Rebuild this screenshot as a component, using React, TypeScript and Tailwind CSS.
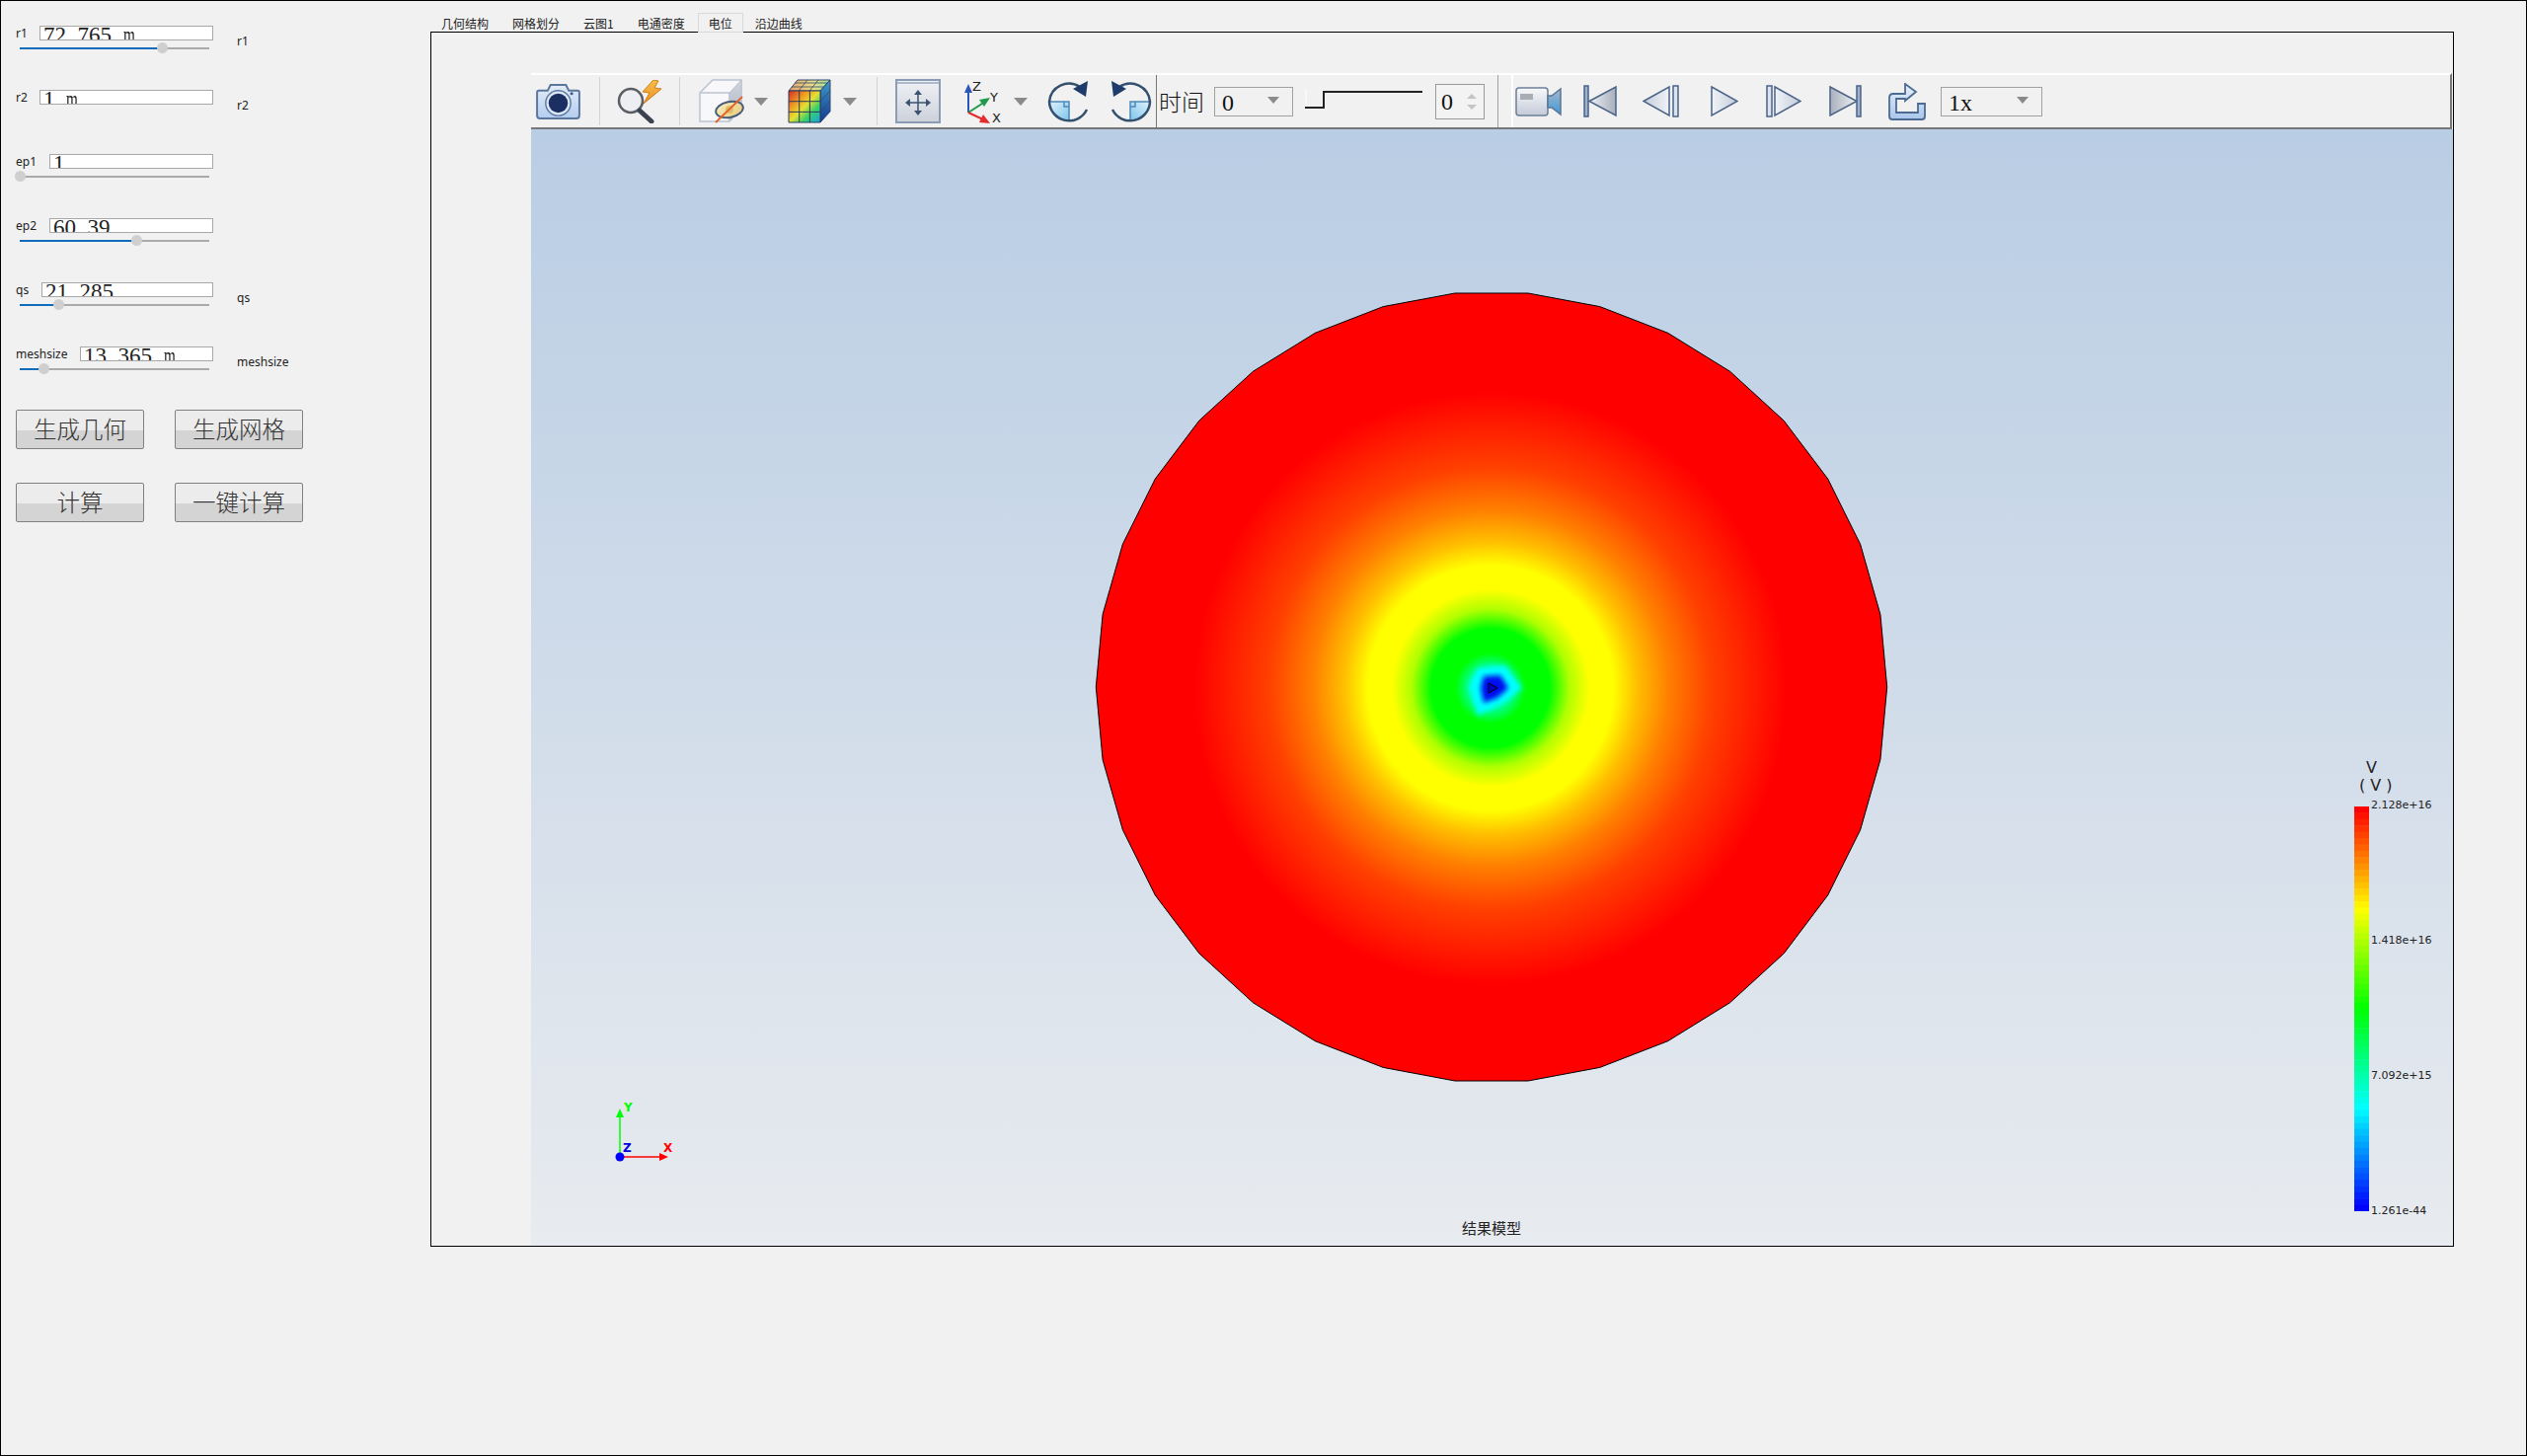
import React from "react";

const SERIF = "font-['Liberation_Serif','Noto_Sans_CJK_SC',serif]";
const CJK = "font-['Noto_Sans_CJK_SC',sans-serif]";

function Sim({ text }: { text: string }) {
  return (
    <>
      {text.split("").map((c, i) => (
        <span key={i} className={c === "m" ? "inline-block w-[11.5px] origin-left scale-x-[0.66]" : "inline-block w-[11.5px] text-center"}>
          {c === " " ? "\u00a0" : c}
        </span>
      ))}
    </>
  );
}

function Row({ label, value, inputW, pct, side }: { label: string; value: string; inputW: number; pct?: number; side?: string }) {
  return (
    <div className="flex h-[65px] pl-[15px]">
      <div className="w-[200px]">
        <div className="flex h-[15px] items-center justify-between">
          <span className="text-[12px] leading-[14px] text-[#222]">{label}</span>
          <div style={{ width: inputW }} className={`h-[15px] overflow-hidden border border-[#a8a8a8] bg-white pl-[3px] text-[23px] leading-[23px] text-[#222] ${SERIF}`}>
            <div className="-mt-[3px] whitespace-nowrap">
              <Sim text={value} />
            </div>
          </div>
        </div>
        {pct !== undefined && (
          <div className="relative ml-[4px] mt-[7px] h-[2px] w-[192px] bg-[#aaaaaa]">
            <div style={{ width: `${pct}%` }} className="h-full bg-[#0f6cbd]" />
            <div style={{ left: `${pct}%` }} className="absolute -top-[5px] -ml-[5px] h-[11px] w-[11px] rounded-full bg-[#cfcfcf]" />
          </div>
        )}
      </div>
      {side && <span className="ml-[24px] mt-[9px] h-[14px] text-[12px] leading-[14px] text-[#222]">{side}</span>}
    </div>
  );
}

function Btn({ children }: { children: React.ReactNode }) {
  return (
    <div className={`flex h-[40px] w-[130px] items-center justify-center rounded-[2px] border border-[#808080] bg-[linear-gradient(to_bottom,#ececec_52%,#d4d4d4_52%)] text-[23.5px] font-light leading-none text-[#333] ${CJK}`}>
      {children}
    </div>
  );
}

function Tri({ ml }: { ml: string }) {
  return (
    <svg width="14" height="8" viewBox="0 0 14 8" className={ml}>
      <path d="M0 0H14L7 8Z" fill="#8a8a8a" />
    </svg>
  );
}

function Sep({ ml }: { ml: string }) {
  return <div className={`h-[49px] w-px bg-[#d4d4d4] ${ml}`} />;
}

const Camera = () => (
  <svg width="45" height="37" viewBox="0 0 46 38" className="ml-[5px]">
    <defs>
      <linearGradient id="cam" x1="0" y1="0" x2="0" y2="1">
        <stop offset="0" stopColor="#e3ecf8" />
        <stop offset="1" stopColor="#b4cdee" />
      </linearGradient>
    </defs>
    <path d="M3 8H12L15 2H31L34 8H43Q45 8 45 10V34Q45 37 42 37H4Q1 37 1 34V10Q1 8 3 8Z" fill="url(#cam)" stroke="#5a769c" strokeWidth="2" />
    <circle cx="23" cy="21" r="13" fill="#dfe8f5" stroke="#5c7aa5" strokeWidth="1.5" />
    <circle cx="23" cy="21" r="10" fill="#1b2f63" />
    <circle cx="37" cy="11" r="1.6" fill="#3c5a8c" />
  </svg>
);

const Magnifier = () => (
  <svg width="47" height="44" viewBox="0 0 47 44" className="ml-[17px]">
    <defs>
      <linearGradient id="bolt" x1="0" y1="0" x2="0" y2="1">
        <stop offset="0" stopColor="#f7c04a" />
        <stop offset="1" stopColor="#ec8f26" />
      </linearGradient>
    </defs>
    <path d="M37 0L26 12L33 13L27 24L45 9L38 8L42 1Z" fill="url(#bolt)" stroke="#d47a14" strokeWidth="1" />
    <circle cx="14" cy="21" r="12" fill="#eceef2" stroke="#5a5d61" strokeWidth="2.5" />
    <path d="M23 31L35 42" stroke="#3b4250" strokeWidth="5" strokeLinecap="round" />
  </svg>
);

const HideCube = () => (
  <svg width="46" height="45" viewBox="0 0 46 45" className="ml-[19px]">
    <defs>
      <linearGradient id="cs" x1="0" y1="0" x2="0" y2="1">
        <stop offset="0" stopColor="#cfd4dc" />
        <stop offset="1" stopColor="#aeb6c4" />
      </linearGradient>
      <linearGradient id="eye" x1="0" y1="0" x2="1" y2="1">
        <stop offset="0" stopColor="#f6efc8" />
        <stop offset="1" stopColor="#e9c877" />
      </linearGradient>
    </defs>
    <path d="M1 14L14 1H43V30L31 43H1Z" fill="#f8f8fa" stroke="#bcc3d0" strokeWidth="1.5" />
    <path d="M31 14L43 1V30L31 43Z" fill="url(#cs)" stroke="#bcc3d0" strokeWidth="1" />
    <path d="M1 14H31V43" fill="none" stroke="#bcc3d0" strokeWidth="1.5" />
    <ellipse cx="31" cy="31" rx="14" ry="8" transform="rotate(-12 31 31)" fill="url(#eye)" stroke="#475a78" strokeWidth="2" />
    <circle cx="31" cy="31" r="4" fill="#e1bd68" />
    <path d="M17 44L44 18" stroke="#e0622a" strokeWidth="1.8" />
  </svg>
);

const ColorCube = () => (
  <svg width="44" height="45" viewBox="0 0 44 45" className="ml-[20px]">
    <defs>
      <linearGradient id="front" x1="0" y1="0" x2="1" y2="1">
        <stop offset="0" stopColor="#d92b25" />
        <stop offset="0.3" stopColor="#ee9a22" />
        <stop offset="0.5" stopColor="#e6e032" />
        <stop offset="0.72" stopColor="#35d06a" />
        <stop offset="1" stopColor="#16a0e6" />
      </linearGradient>
      <linearGradient id="topf" x1="0" y1="0" x2="1" y2="0">
        <stop offset="0" stopColor="#e9a06a" />
        <stop offset="0.6" stopColor="#e6e08c" />
        <stop offset="1" stopColor="#9adf9a" />
      </linearGradient>
      <linearGradient id="sidef" x1="0" y1="0" x2="0" y2="1">
        <stop offset="0" stopColor="#3f9ac8" />
        <stop offset="1" stopColor="#123a8f" />
      </linearGradient>
    </defs>
    <path d="M1 12L10 1H43L33 12Z" fill="url(#topf)" stroke="#35476a" strokeWidth="1" />
    <path d="M33 12L43 1V33L33 44Z" fill="url(#sidef)" stroke="#35476a" strokeWidth="1" />
    <path d="M11 12L20 1M22 12L31 1M4 8H36M7 4H40M33 22.7L43 12M33 33.4L43 22" stroke="#35476a" strokeWidth="0.8" fill="none" />
    <rect x="1" y="12" width="32" height="32" fill="url(#front)" />
    <path d="M1 12H33V44H1ZM11.7 12V44M22.4 12V44M1 22.7H33M1 33.4H33" fill="none" stroke="#2b3a5e" strokeWidth="1" />
  </svg>
);

const MoveIcon = () => (
  <svg width="46" height="45" viewBox="0 0 46 45" className="ml-[18px]">
    <defs>
      <linearGradient id="mv" x1="0" y1="0" x2="0" y2="1">
        <stop offset="0" stopColor="#f0f1f5" />
        <stop offset="1" stopColor="#ccd1da" />
      </linearGradient>
    </defs>
    <rect x="1" y="1" width="44" height="43" fill="url(#mv)" stroke="#8c9cb5" strokeWidth="2" />
    <rect x="2" y="3" width="42" height="2" fill="#aebacf" />
    <path d="M23 14V34M13 24H33" stroke="#3d5272" strokeWidth="1.5" />
    <path d="M23 11L27 16H19ZM23 37L27 32H19ZM10 24L15 20V28ZM36 24L31 20V28Z" fill="#3d5272" />
  </svg>
);

const AxisIcon = () => (
  <svg width="40" height="44" viewBox="0 0 40 44" className="ml-[23px]">
    <path d="M5 33V11" stroke="#2b55b8" strokeWidth="2" />
    <path d="M5 4L9 13H1Z" fill="#2b55b8" />
    <path d="M5 33L22 22" stroke="#1f9a4a" strokeWidth="2" />
    <path d="M27 18L21 27L16 20Z" fill="#1f9a4a" />
    <path d="M5 33L22 41" stroke="#e52b2b" strokeWidth="2" />
    <path d="M27 44L16 43L20 35Z" fill="#e52b2b" />
    <text x="9" y="11" fontSize="13" fill="#222" fontFamily="'DejaVu Sans',sans-serif">Z</text>
    <text x="27" y="22" fontSize="13" fill="#222" fontFamily="'DejaVu Sans',sans-serif">Y</text>
    <text x="29" y="43" fontSize="13" fill="#222" fontFamily="'DejaVu Sans',sans-serif">X</text>
  </svg>
);

const Rotate = ({ mirror, ml, id }: { mirror?: boolean; ml: string; id: string }) => (
  <svg width="43" height="44" viewBox="0 0 43 44" className={ml}>
    <defs>
      <linearGradient id={id} x1="0" y1="0" x2="1" y2="1">
        <stop offset="0" stopColor="#dff1fb" />
        <stop offset="1" stopColor="#7cc4ec" />
      </linearGradient>
    </defs>
    <g transform={mirror ? "translate(43 0) scale(-1 1)" : undefined}>
      <path d="M2 22H22V42A20 20 0 0 1 2 22Z" fill={`url(#${id})`} />
      <path d="M2 22H22V42M17 22V27H22" fill="none" stroke="#4d88b8" strokeWidth="1.5" />
      <path d="M33 7A20 20 0 0 0 2 22A20 20 0 0 0 40 30" fill="none" stroke="#34506f" strokeWidth="2.5" />
      <path d="M41 1L39 17L26 9Z" fill="#1d3b6b" />
    </g>
  </svg>
);

const Video = () => (
  <svg width="47" height="30" viewBox="0 0 47 30" className="ml-[2px]">
    <defs>
      <linearGradient id="vb" x1="0" y1="0" x2="0" y2="1">
        <stop offset="0" stopColor="#f7f8fb" />
        <stop offset="1" stopColor="#c4cbd8" />
      </linearGradient>
      <linearGradient id="vl" x1="0" y1="0" x2="0" y2="1">
        <stop offset="0" stopColor="#a8b8cc" />
        <stop offset="1" stopColor="#3d9ad8" />
      </linearGradient>
    </defs>
    <rect x="1" y="1" width="32" height="28" rx="3" fill="url(#vb)" stroke="#6d7f99" strokeWidth="1.5" />
    <rect x="5" y="7" width="13" height="6" fill="#a9adb4" />
    <path d="M33 9H37L46 2V28L37 21H33Z" fill="url(#vl)" stroke="#5c7595" strokeWidth="1.5" />
  </svg>
);

const grad = (id: string, a: string, b: string) => (
  <defs>
    <linearGradient id={id} x1="0" y1="0" x2="1" y2="0">
      <stop offset="0" stopColor={a} />
      <stop offset="1" stopColor={b} />
    </linearGradient>
  </defs>
);

const PS = "#4a6388";

const First = () => (
  <svg width="34" height="33" viewBox="0 0 34 33" className="ml-[22px]">
    {grad("f1", "#eef1f6", "#a8afbb")}
    <rect x="1" y="1" width="4" height="31" fill="#9fb1cc" stroke={PS} strokeWidth="1.5" />
    <path d="M6 16.5L33 2V31Z" fill="url(#f1)" stroke={PS} strokeWidth="1.5" />
  </svg>
);
const Prev = () => (
  <svg width="37" height="33" viewBox="0 0 37 33" className="ml-[26px]">
    {grad("p1", "#c5ccd8", "#f0f3f8")}
    <path d="M1 16.5L27 2V31Z" fill="url(#p1)" stroke={PS} strokeWidth="1.5" />
    <rect x="31" y="1" width="5" height="31" fill="#dbe3ef" stroke={PS} strokeWidth="1.5" />
  </svg>
);
const Play = () => (
  <svg width="28" height="33" viewBox="0 0 28 33" className="ml-[32px]">
    {grad("pl", "#f0f3f8", "#c5ccd8")}
    <path d="M1 2L27 16.5L1 31Z" fill="url(#pl)" stroke={PS} strokeWidth="1.5" />
  </svg>
);
const Next = () => (
  <svg width="36" height="33" viewBox="0 0 36 33" className="ml-[28px]">
    {grad("n1", "#f0f3f8", "#c5ccd8")}
    <rect x="1" y="1" width="5" height="31" fill="#dbe3ef" stroke={PS} strokeWidth="1.5" />
    <path d="M9 2L35 16.5L9 31Z" fill="url(#n1)" stroke={PS} strokeWidth="1.5" />
  </svg>
);
const Last = () => (
  <svg width="33" height="33" viewBox="0 0 33 33" className="ml-[28px]">
    {grad("l1", "#a8afbb", "#eef1f6")}
    <path d="M1 2L28 16.5L1 31Z" fill="url(#l1)" stroke={PS} strokeWidth="1.5" />
    <rect x="28" y="1" width="4" height="31" fill="#9fb1cc" stroke={PS} strokeWidth="1.5" />
  </svg>
);
const Loop = () => (
  <svg width="38" height="38" viewBox="0 0 38 38" className="ml-[27px]">
    <defs>
      <linearGradient id="lp" x1="0" y1="0" x2="0" y2="1">
        <stop offset="0" stopColor="#e8f0fa" />
        <stop offset="1" stopColor="#a9c6ea" />
      </linearGradient>
    </defs>
    <path d="M1 15Q1 11 5 11H17V5V1L28 9L17 18V16H8V30H30V21H37V34Q37 37 34 37H4Q1 37 1 34Z" fill="url(#lp)" stroke="#4d6b92" strokeWidth="1.8" />
  </svg>
);

function Combo({ w, text, ml, triRight }: { w: string; text: string; ml: string; triRight: string }) {
  return (
    <div className={`flex h-[30px] items-start justify-between border border-[#a0a0a0] pl-[7px] text-[24px] leading-[30px] text-[#111] ${SERIF} ${w} ${ml}`}>
      <span>{text}</span>
      <svg width="12" height="7" viewBox="0 0 12 7" className={`mt-[9px] ${triRight}`}>
        <path d="M0 0H12L6 7Z" fill="#8a8a8a" />
      </svg>
    </div>
  );
}

function Toolbar() {
  return (
    <div className="flex h-[57px] w-[1946px] shrink-0 items-center border-b-2 border-r-2 border-t-2 border-b-[#777777] border-r-[#777777] border-t-white">
      <Camera />
      <Sep ml="ml-[19px]" />
      <Magnifier />
      <Sep ml="ml-[16px]" />
      <HideCube />
      <Tri ml="ml-[10px]" />
      <ColorCube />
      <Tri ml="ml-[12px]" />
      <Sep ml="ml-[20px]" />
      <MoveIcon />
      <AxisIcon />
      <Tri ml="ml-[11px]" />
      <Rotate id="r1" ml="ml-[20px]" />
      <Rotate id="r2" mirror ml="ml-[20px]" />
      <div className="ml-[4px] w-px self-stretch bg-[#777777]" />
      <span className={`ml-[2px] w-[46px] text-[23px] font-light leading-none text-[#111] ${CJK}`}>时间</span>
      <Combo w="w-[80px]" text="0" ml="ml-[10px]" triRight="mr-[13px]" />
      <svg width="120" height="24" viewBox="0 0 120 24" className="ml-[12px] mb-[4px]">
        <path d="M1 1V19M19 4H119" stroke="#ffffff" strokeWidth="1" />
        <path d="M0 20H19V4H119" fill="none" stroke="#222" strokeWidth="2" />
      </svg>
      <div className={`ml-[12px] flex h-[36px] w-[50px] items-center justify-between border border-[#999999] bg-[#f3f3f3] pl-[5px] pr-[7px] text-[24px] text-[#111] ${SERIF}`}>
        <span>0</span>
        <svg width="10" height="18" viewBox="0 0 10 18">
          <path d="M0 6L5 1L10 6ZM0 12L5 17L10 12Z" fill="#c4c4c4" />
        </svg>
      </div>
      <div className="ml-[13px] w-px self-stretch bg-[#a0a0a0]" />
      <div className="ml-[13px] w-[2px] self-stretch bg-white" />
      <Video />
      <First />
      <Prev />
      <Play />
      <Next />
      <Last />
      <Loop />
      <Combo w="w-[103px]" text="1x" ml="ml-[15px]" triRight="mr-[13px]" />
    </div>
  );
}

const ramp = (t: number) => {
  const s = [
    [0, 0, 255],
    [0, 255, 255],
    [0, 255, 0],
    [255, 255, 0],
    [255, 0, 0],
  ];
  const p = Math.min(t, 0.9999) * 4;
  const i = Math.floor(p);
  const f = p - i;
  const m = s[i].map((v, k) => Math.round(v + (s[i + 1][k] - v) * f));
  return `rgb(${m[0]},${m[1]},${m[2]})`;
};

function ColorBar() {
  const n = 64;
  return (
    <svg width="15" height="410" viewBox="0 0 15 410" className="absolute left-[1847px] top-[686px]">
      {Array.from({ length: n }, (_, i) => (
        <rect key={i} x="0" y={(i * 410) / n} width="15" height={410 / n + 0.5} fill={ramp(1 - i / (n - 1))} />
      ))}
    </svg>
  );
}

function Model() {
  const R = 400.7;
  const pts = Array.from({ length: 34 }, (_, k) => {
    const a = ((5.294 + k * (360 / 34)) * Math.PI) / 180;
    return `${(402 - R * Math.sin(a)).toFixed(1)},${(402 - R * Math.cos(a)).toFixed(1)}`;
  }).join(" ");
  const shift = (p: number[][]) => p.map(([x, y]) => `${401 + x},${403 + y}`).join(" ");
  return (
    <svg width="804" height="804" viewBox="0 0 804 804" className="absolute left-[571px] top-[163px]">
      <defs>
        <radialGradient id="field" gradientUnits="userSpaceOnUse" cx="401" cy="403" r="400">
          <stop offset="0" stopColor="#00ffc0" />
          <stop offset="0.05" stopColor="#00ffa0" />
          <stop offset="0.09" stopColor="#00ff00" />
          <stop offset="0.15" stopColor="#00ff00" />
          <stop offset="0.2" stopColor="#b0ff00" />
          <stop offset="0.25" stopColor="#ffff00" />
          <stop offset="0.31" stopColor="#ffff00" />
          <stop offset="0.37" stopColor="#ffc000" />
          <stop offset="0.45" stopColor="#ff8000" />
          <stop offset="0.56" stopColor="#ff4000" />
          <stop offset="0.75" stopColor="#ff0000" />
          <stop offset="1" stopColor="#ff0000" />
        </radialGradient>
        <filter id="soft" x="-30%" y="-30%" width="160%" height="160%">
          <feGaussianBlur stdDeviation="2.5" />
        </filter>
      </defs>
      <polygon points={pts} fill="url(#field)" stroke="#000" strokeWidth="1" />
      <polygon points={shift([[-13, -20], [15, -23], [32, 0], [17, 13], [-13, 28], [-22, -2]])} fill="#00ffff" filter="url(#soft)" />
      <polygon points={shift([[-7, -12], [10, -13], [18, 0], [7, 10], [-7, 15], [-10, 0]])} fill="#0010f0" filter="url(#soft)" />
      <path d={`M399 398V408L408 403Z`} fill="#0000c8" stroke="#000" strokeWidth="1" />
    </svg>
  );
}

function AxesWidget() {
  return (
    <svg width="90" height="80" viewBox="0 0 90 80" className="absolute left-[67px] top-[979px]" fontFamily="'DejaVu Sans',sans-serif" fontWeight="700" fontSize="12">
      <path d="M23 62V20" stroke="#00ff00" strokeWidth="1.5" />
      <path d="M23 13L27 22H19Z" fill="#00ff00" />
      <path d="M23 62H64" stroke="#ff0000" strokeWidth="1.5" />
      <path d="M72 62L63 58V66Z" fill="#ff0000" />
      <circle cx="23" cy="62" r="4.5" fill="#0000ff" />
      <text x="27" y="16" fill="#00ff00">Y</text>
      <text x="26" y="57" fill="#0000e0">Z</text>
      <text x="67" y="57" fill="#ff0000">X</text>
    </svg>
  );
}

function Legend() {
  const lab = "absolute left-[1864px] text-[11px] leading-[14px] text-[#222] font-['DejaVu_Sans',sans-serif]";
  return (
    <>
      <div className="absolute left-[1859px] top-[639px] text-[16px] leading-[16px] text-[#222] font-['DejaVu_Sans',sans-serif]">V</div>
      <div className="absolute left-[1852px] top-[657px] whitespace-nowrap text-[16px] leading-[16px] text-[#222] font-['DejaVu_Sans',sans-serif]">( V )</div>
      <ColorBar />
      <div className={`${lab} top-[678px]`}>2.128e+16</div>
      <div className={`${lab} top-[815px]`}>1.418e+16</div>
      <div className={`${lab} top-[952px]`}>7.092e+15</div>
      <div className={`${lab} top-[1089px]`}>1.261e-44</div>
    </>
  );
}

export default function App() {
  return (
    <div className="flex h-[1475px] w-[2560px] overflow-hidden border border-black bg-[#f1f1f1] font-['Noto_Sans','Noto_Sans_CJK_SC',sans-serif]">
      <div className="w-[435px] shrink-0 pt-[25px]">
        <Row label="r1" value="72.765 m" inputW={176} pct={75} side="r1" />
        <Row label="r2" value="1 m" inputW={176} side="r2" />
        <Row label="ep1" value="1" inputW={166} pct={0} />
        <Row label="ep2" value="60.39" inputW={166} pct={61.5} />
        <Row label="qs" value="21.285" inputW={174} pct={20.5} side="qs" />
        <Row label="meshsize" value="13.365 m" inputW={135} pct={12.5} side="meshsize" />
        <div className="-mt-px grid w-[307px] grid-cols-[130px_130px] gap-x-[31px] gap-y-[34px] pl-[15px]">
          <Btn>生成几何</Btn>
          <Btn>生成网格</Btn>
          <Btn>计算</Btn>
          <Btn>一键计算</Btn>
        </div>
      </div>
      <div className="flex w-[2050px] shrink-0 flex-col pt-[12px]">
        <div className={`relative z-10 -mb-px flex h-[20px] items-center pt-[1px] text-[12px] leading-none text-[#222] ${CJK}`}>
          <span className="ml-[11px]">几何结构</span>
          <span className="ml-[24px]">网格划分</span>
          <span className="ml-[24px]">云图1</span>
          <span className="ml-[24px]">电通密度</span>
          <span className="ml-[13px] -mt-[1px] flex h-[20px] items-center border border-[#d9d9d9] bg-[#f1f1f1] px-[10px] pt-[1px]">电位</span>
          <span className="ml-[12px]">沿边曲线</span>
        </div>
        <div className="flex h-[1231px] flex-col border border-black pl-[101px] pt-[41px]">
          <Toolbar />
          <div className="relative flex-1 bg-[linear-gradient(to_bottom,#b9cde4,#e8ebef)]">
            <Model />
            <AxesWidget />
            <Legend />
            <div className="absolute bottom-[9px] left-[943px] text-[15px] leading-[18px] text-[#222]">结果模型</div>
          </div>
        </div>
      </div>
    </div>
  );
}
